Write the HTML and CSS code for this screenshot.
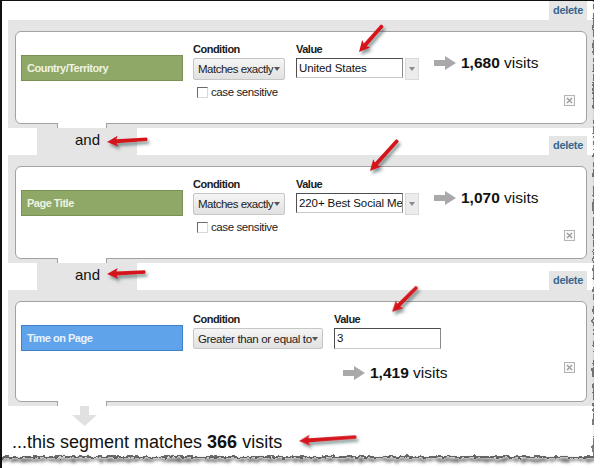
FILE: index.html
```html
<!DOCTYPE html>
<html lang="en">
<head>
    <meta charset="UTF-8">
    <meta name="viewport" content="width=device-width, initial-scale=1.0">
    <title>Advanced Segment</title>
    <link rel="stylesheet" href="styles.css">
</head>
<body>
    <div class="sheet">
        <div class="bar bar-first">
            <span class="delete">delete</span>
        </div>
        <div class="panel">
            <div class="card">
                <div class="dim dim-green">Country/Territory</div>
                <div class="field">
                    <div class="field-label">Condition</div>
                    <div class="select">Matches exactly <span class="caret"></span></div>
                    <div class="check"><span class="box"></span>case sensitive</div>
                </div>
                <div class="field">
                    <div class="field-label">Value</div>
                    <div class="combo">
                        <div class="input">United States</div>
                        <div class="drop"><span class="caret caret-light"></span></div>
                    </div>
                </div>
                <div class="result">
                    <svg width="22" height="14" viewBox="0 0 22 14"><path d="M0 4h11V0l11 7-11 7v-4H0z" fill="#a9a9a9"/></svg>
                    <span><b>1,680</b> visits</span>
                </div>
                <span class="remove">
                    <svg width="11" height="11" viewBox="0 0 11 11"><rect x="0.5" y="0.5" width="10" height="10" fill="#f7f7f7" stroke="#b4b4b4"/><path d="M3 3l5 5M8 3l-5 5" stroke="#9a9a9a" stroke-width="1.2"/></svg>
                </span>
            </div>
        </div>

        <div class="bar">
            <div class="joiner">and</div>
            <span class="delete">delete</span>
        </div>
        <div class="panel">
            <div class="card">
                <div class="dim dim-green">Page Title</div>
                <div class="field">
                    <div class="field-label">Condition</div>
                    <div class="select">Matches exactly <span class="caret"></span></div>
                    <div class="check"><span class="box"></span>case sensitive</div>
                </div>
                <div class="field">
                    <div class="field-label">Value</div>
                    <div class="combo">
                        <div class="input">220+ Best Social Media Tools</div>
                        <div class="drop"><span class="caret caret-light"></span></div>
                    </div>
                </div>
                <div class="result">
                    <svg width="22" height="14" viewBox="0 0 22 14"><path d="M0 4h11V0l11 7-11 7v-4H0z" fill="#a9a9a9"/></svg>
                    <span><b>1,070</b> visits</span>
                </div>
                <span class="remove">
                    <svg width="11" height="11" viewBox="0 0 11 11"><rect x="0.5" y="0.5" width="10" height="10" fill="#f7f7f7" stroke="#b4b4b4"/><path d="M3 3l5 5M8 3l-5 5" stroke="#9a9a9a" stroke-width="1.2"/></svg>
                </span>
            </div>
        </div>

        <div class="bar">
            <div class="joiner">and</div>
            <span class="delete">delete</span>
        </div>
        <div class="panel">
            <div class="card card-tall">
                <div class="dim dim-blue">Time on Page</div>
                <div class="field">
                    <div class="field-label">Condition</div>
                    <div class="select select-wide">Greater than or equal to <span class="caret"></span></div>
                </div>
                <div class="field">
                    <div class="field-label">Value</div>
                    <div class="input input-short">3</div>
                    <div class="result result-below">
                        <svg width="22" height="14" viewBox="0 0 22 14"><path d="M0 4h11V0l11 7-11 7v-4H0z" fill="#a9a9a9"/></svg>
                        <span><b>1,419</b> visits</span>
                    </div>
                </div>
                <span class="remove">
                    <svg width="11" height="11" viewBox="0 0 11 11"><rect x="0.5" y="0.5" width="10" height="10" fill="#f7f7f7" stroke="#b4b4b4"/><path d="M3 3l5 5M8 3l-5 5" stroke="#9a9a9a" stroke-width="1.2"/></svg>
                </span>
            </div>
        </div>

        <div class="end">
            <svg class="down" width="25" height="20" viewBox="0 0 25 20"><path d="M8 0h9v9h8L12.5 20 0 9h8z" fill="#e1e1e1"/></svg>
            <div class="total">...this segment matches <b>366</b> visits</div>
        </div>

        <!-- callout arrows and the torn paper edge -->
        <svg class="overlay" width="607" height="468" viewBox="0 0 607 468">
            <defs>
                <filter id="shadow" x="-30%" y="-30%" width="160%" height="160%">
                    <feDropShadow dx="2" dy="3" stdDeviation="1.4" flood-color="#2f4f4f" flood-opacity="0.55"/>
                </filter>
                <filter id="rough" x="-5%" y="-5%" width="110%" height="110%">
                    <feTurbulence type="fractalNoise" baseFrequency="0.22" numOctaves="2" seed="4" result="noise"/>
                    <feDisplacementMap in="SourceGraphic" in2="noise" scale="6" xChannelSelector="R" yChannelSelector="G"/>
                </filter>
                <filter id="roughBlur" x="-5%" y="-5%" width="110%" height="110%">
                    <feTurbulence type="fractalNoise" baseFrequency="0.22" numOctaves="2" seed="4" result="noise"/>
                    <feDisplacementMap in="SourceGraphic" in2="noise" scale="6" xChannelSelector="R" yChannelSelector="G" result="moved"/>
                    <feGaussianBlur in="moved" stdDeviation="1.6"/>
                </filter>
            </defs>

            <g fill="#d4161e" filter="url(#shadow)">
                <path transform="translate(359 52) rotate(-48.5)" d="M0 0L11 -5.5L9.5 -2L35 -1.8Q36.5 0 35 1.8L9.5 2L11 5.5Z"/>
                <path transform="translate(107 142) rotate(-4)" d="M0 0L11 -5.5L9.5 -2L40 -1.8Q41.5 0 40 1.8L9.5 2L11 5.5Z"/>
                <path transform="translate(370 171) rotate(-48)" d="M0 0L11 -5.5L9.5 -2L41 -1.8Q42.5 0 41 1.8L9.5 2L11 5.5Z"/>
                <path transform="translate(107 274) rotate(-3)" d="M0 0L11 -5.5L9.5 -2L38 -1.8Q39.5 0 38 1.8L9.5 2L11 5.5Z"/>
                <path transform="translate(392 312) rotate(-45)" d="M0 0L11 -5.5L9.5 -2L35 -1.8Q36.5 0 35 1.8L9.5 2L11 5.5Z"/>
                <path transform="translate(299 441) rotate(-4)" d="M0 0L11 -5.5L9.5 -2L57 -1.8Q58.5 0 57 1.8L9.5 2L11 5.5Z"/>
            </g>

            <path d="M594 -10V457H-10V480H620V-10Z" fill="#fff" filter="url(#rough)"/>
            <path d="M597 -10V460H-10" fill="none" stroke="#6a6a6a" stroke-width="3" filter="url(#roughBlur)"/>
            <path d="M594 -10V457H-10" fill="none" stroke="#3a3a3a" stroke-width="1.3" filter="url(#rough)"/>
        </svg>
    </div>
</body>
</html>
```

FILE: styles.css
```css
body {
    margin: 0;
    background: #fff;
    color: #1a1a1a;
    font-family: "Liberation Sans", Arial, sans-serif;
}
.sheet {
    position: relative;
    width: 592px;
    height: 467px;
    border-top: 1px solid #111;
    border-left: 2px solid #111;
    overflow: hidden;
}
.bar {
    display: flex;
    align-items: flex-end;
    height: 27px;
}
.bar-first {
    height: 19px;
}
.delete {
    margin-left: auto;
    margin-right: 7px;
    width: 38px;
    height: 19px;
    background: #e5e5e5;
    color: #36678f;
    font-weight: bold;
    font-size: 11px;
    letter-spacing: -0.3px;
    line-height: 19px;
    text-align: center;
}
.joiner {
    margin-left: 35px;
    width: 100px;
    height: 27px;
    box-sizing: border-box;
    padding-left: 38px;
    background: #e5e5e5;
    font-size: 15px;
    line-height: 23px;
    color: #111;
}
.panel {
    margin-left: 6px;
    padding: 11px 7px 4px 7px;
    background: #e5e5e5;
}
.card {
    position: relative;
    display: flex;
    align-items: flex-start;
    height: 93px;
    box-sizing: border-box;
    border: 1px solid #a2a2a2;
    border-radius: 6px;
    background: #fff;
}
.card-tall {
    height: 101px;
}
/* gap in the bottom edge where the "and" tab hangs */
.card::after {
    content: "";
    position: absolute;
    left: 41px;
    bottom: -5px;
    width: 48px;
    height: 5px;
    background: #fff;
    border-left: 1px solid #a2a2a2;
    border-right: 1px solid #a2a2a2;
}
.dim {
    width: 162px;
    height: 26px;
    box-sizing: border-box;
    margin: 23px 10px 0 5px;
    padding-left: 5px;
    font-weight: bold;
    font-size: 11px;
    letter-spacing: -0.5px;
    line-height: 24px;
}
.dim-green {
    background: #8fa767;
    border: 1px solid #7a9253;
    color: #eef3e2;
}
.dim-blue {
    background: #5fa3ea;
    border: 1px solid #3f80c8;
    color: #e9f2fc;
}
.field {
    margin: 10px 11px 0 0;
}
.field-label {
    font-weight: bold;
    font-size: 11px;
    letter-spacing: -0.5px;
    line-height: 14px;
    margin-bottom: 2px;
}
.select {
    display: flex;
    align-items: center;
    justify-content: space-between;
    width: 92px;
    height: 22px;
    box-sizing: border-box;
    padding: 0 4px 0 4px;
    border: 1px solid #c6c6c6;
    border-radius: 2px;
    background: linear-gradient(#f5f5f5, #e1e1e1);
    font-size: 11.5px;
    letter-spacing: -0.5px;
    white-space: nowrap;
    color: #222;
}
.select-wide {
    width: 130px;
    height: 21px;
    letter-spacing: -0.35px;
}
.caret {
    width: 0;
    height: 0;
    border-left: 3.5px solid transparent;
    border-right: 3.5px solid transparent;
    border-top: 4px solid #555;
}
.caret-light {
    border-top-color: #8a8a8a;
}
.check {
    display: flex;
    align-items: center;
    margin: 6px 0 0 4px;
    font-size: 11.5px;
    letter-spacing: -0.4px;
    color: #222;
}
.box {
    width: 11px;
    height: 11px;
    box-sizing: border-box;
    margin-right: 3px;
    border: 1px solid;
    border-color: #6a6a6a #d8d8d8 #d8d8d8 #6a6a6a;
    background: #fff;
}
.combo {
    display: flex;
    align-items: flex-start;
}
.input {
    width: 107px;
    height: 20px;
    box-sizing: border-box;
    padding-left: 2px;
    border: 1px solid;
    border-color: #4f4f4f #8a8a8a #c9c9c9 #4f4f4f;
    background: #fff;
    font-size: 11.5px;
    letter-spacing: -0.1px;
    line-height: 18px;
    white-space: nowrap;
    overflow: hidden;
    color: #111;
}
.input-short {
    height: 21px;
    line-height: 19px;
}
.drop {
    display: flex;
    align-items: center;
    justify-content: center;
    width: 14px;
    height: 22px;
    box-sizing: border-box;
    margin-left: 2px;
    border: 1px solid #d9d9d9;
    background: #ececec;
}
.result {
    display: flex;
    align-items: center;
    gap: 5px;
    margin: 22px 0 0 4px;
    height: 18px;
    font-size: 15.5px;
    white-space: nowrap;
    color: #111;
}
.result-below {
    margin: 15px 0 0 9px;
}
.remove {
    display: flex;
    align-self: flex-end;
    margin: 0 11px 17px auto;
}
.card-tall .remove {
    margin-bottom: 28px;
}
.down {
    display: block;
    margin-left: 70px;
}
.total {
    margin: 5px 0 0 10px;
    font-size: 18px;
    line-height: 22px;
    color: #111;
}
.overlay {
    position: absolute;
    top: -1px;
    left: -2px;
    pointer-events: none;
}
```
